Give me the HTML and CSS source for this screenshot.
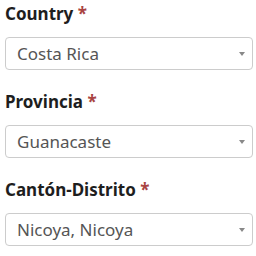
FILE: index.html
```
<!DOCTYPE html>
<html>
<head>
    <meta name="viewport" content="width=device-width, initial-scale=1.0">
    <link rel="stylesheet" href="styles.css">
</head>
<body>

<form class="location-form">
    <div class="form-group">
        <label class="form-label">Country <span class="required">*</span></label>
        <div class="select-wrap">
            <select class="form-select">
                <option>Costa Rica</option>
            </select>
        </div>
    </div>
    <div class="form-group">
        <label class="form-label">Provincia <span class="required">*</span></label>
        <div class="select-wrap">
            <select class="form-select">
                <option>Guanacaste</option>
            </select>
        </div>
    </div>
    <div class="form-group">
        <label class="form-label">Cantón-Distrito <span class="required">*</span></label>
        <div class="select-wrap">
            <select class="form-select">
                <option>Nicoya, Nicoya</option>
            </select>
        </div>
    </div>
</form>

</body>
</html>
```

FILE: styles.css
```
* {box-sizing: border-box;}

body {
    margin: 0;
    background-color: #ffffff;
    font-family: "Noto Sans", "Open Sans", sans-serif;
}

.location-form {
    padding: 2px 3px 0 5px;
}

.form-group {
    display: flex;
    flex-direction: column;
    margin-bottom: 20px;
}

.form-label {
    font-size: 17px;
    line-height: 24px;
    font-weight: bold;
    color: #1e1e1e;
    margin-bottom: 11px;
}

.required {
    color: #a94442;
}

.select-wrap {
    position: relative;
}

/* small caret like the bootstrap select */
.select-wrap::after {
    content: "";
    position: absolute;
    right: 8px;
    top: 15px;
    border-left: 3px solid transparent;
    border-right: 3px solid transparent;
    border-top: 4px solid #888888;
    pointer-events: none;
}

.form-select {
    -webkit-appearance: none;
    appearance: none;
    width: 100%;
    height: 33px;
    padding: 0 24px 0 11px;
    font-family: "Noto Sans", "Open Sans", sans-serif;
    font-size: 17px;
    color: #555555;
    background-color: #ffffff;
    border: 1px solid #cccccc;
    border-radius: 4px;
}
```
